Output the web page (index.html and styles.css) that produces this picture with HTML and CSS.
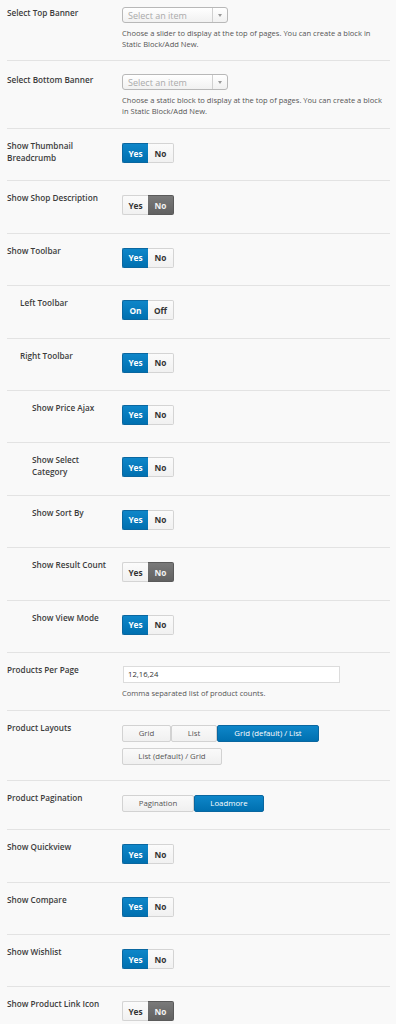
FILE: index.html
```html
<!DOCTYPE html>
<html lang="en">
<head>
    <meta charset="UTF-8">
    <meta name="viewport" content="width=device-width, initial-scale=1.0">
    <title>Shop Options</title>
    <link rel="stylesheet" href="styles.css">
</head>
<body>

<div class="options">

    <div class="row row-select first">
        <div class="label">Select Top Banner</div>
        <div class="field">
            <div class="select">
                <span class="placeholder">Select an item</span>
                <span class="arrow"></span>
            </div>
            <p class="desc">Choose a slider to display at the top of pages. You can create a block in Static Block/Add New.</p>
        </div>
    </div>

    <div class="row row-select">
        <div class="label">Select Bottom Banner</div>
        <div class="field">
            <div class="select">
                <span class="placeholder">Select an item</span>
                <span class="arrow"></span>
            </div>
            <p class="desc">Choose a static block to display at the top of pages. You can create a block in Static Block/Add New.</p>
        </div>
    </div>

    <div class="row">
        <div class="label">Show Thumbnail Breadcrumb</div>
        <div class="field">
            <div class="toggle"><span class="on">Yes</span><span>No</span></div>
        </div>
    </div>

    <div class="row">
        <div class="label">Show Shop Description</div>
        <div class="field">
            <div class="toggle"><span>Yes</span><span class="off">No</span></div>
        </div>
    </div>

    <div class="row">
        <div class="label">Show Toolbar</div>
        <div class="field">
            <div class="toggle"><span class="on">Yes</span><span>No</span></div>
        </div>
    </div>

    <div class="row">
        <div class="label indent-1">Left Toolbar</div>
        <div class="field">
            <div class="toggle"><span class="on">On</span><span>Off</span></div>
        </div>
    </div>

    <div class="row">
        <div class="label indent-1">Right Toolbar</div>
        <div class="field">
            <div class="toggle"><span class="on">Yes</span><span>No</span></div>
        </div>
    </div>

    <div class="row">
        <div class="label indent-2">Show Price Ajax</div>
        <div class="field">
            <div class="toggle"><span class="on">Yes</span><span>No</span></div>
        </div>
    </div>

    <div class="row">
        <div class="label indent-2">Show Select Category</div>
        <div class="field">
            <div class="toggle"><span class="on">Yes</span><span>No</span></div>
        </div>
    </div>

    <div class="row">
        <div class="label indent-2">Show Sort By</div>
        <div class="field">
            <div class="toggle"><span class="on">Yes</span><span>No</span></div>
        </div>
    </div>

    <div class="row">
        <div class="label indent-2">Show Result Count</div>
        <div class="field">
            <div class="toggle"><span>Yes</span><span class="off">No</span></div>
        </div>
    </div>

    <div class="row">
        <div class="label indent-2">Show View Mode</div>
        <div class="field">
            <div class="toggle"><span class="on">Yes</span><span>No</span></div>
        </div>
    </div>

    <div class="row row-input">
        <div class="label">Products Per Page</div>
        <div class="field">
            <input type="text" class="text-input" value="12,16,24">
            <p class="desc">Comma separated list of product counts.</p>
        </div>
    </div>

    <div class="row row-layouts">
        <div class="label">Product Layouts</div>
        <div class="field">
            <div class="btn-group">
                <span class="btn w-grid">Grid</span><span class="btn w-list">List</span><span class="btn w-gridlist active">Grid (default) / List</span>
            </div>
            <div class="btn-group">
                <span class="btn w-listgrid">List (default) / Grid</span>
            </div>
        </div>
    </div>

    <div class="row">
        <div class="label">Product Pagination</div>
        <div class="field">
            <div class="btn-group">
                <span class="btn w-pag">Pagination</span><span class="btn w-more active">Loadmore</span>
            </div>
        </div>
    </div>

    <div class="row">
        <div class="label">Show Quickview</div>
        <div class="field">
            <div class="toggle"><span class="on">Yes</span><span>No</span></div>
        </div>
    </div>

    <div class="row">
        <div class="label">Show Compare</div>
        <div class="field">
            <div class="toggle"><span class="on">Yes</span><span>No</span></div>
        </div>
    </div>

    <div class="row">
        <div class="label">Show Wishlist</div>
        <div class="field">
            <div class="toggle"><span class="on">Yes</span><span>No</span></div>
        </div>
    </div>

    <div class="row">
        <div class="label">Show Product Link Icon</div>
        <div class="field">
            <div class="toggle"><span>Yes</span><span class="off">No</span></div>
        </div>
    </div>

</div>

</body>
</html>
```

FILE: styles.css
```css
body {
    font-family: 'Open Sans', 'Noto Sans', sans-serif;
    background-color: #f9f9f9;
    color: #444;
    margin: 0;
    padding: 0;
}

.options {
    padding: 0 6px 0 7px;
}

.row {
    display: flex;
    align-items: flex-start;
    padding: 11px 0 17.4px;
    border-bottom: 1px solid #e3e3e3;
}

.row-select {
    padding: 13px 0 11px;
}

.row-select.first {
    padding: 7px 0 10px;
}

.row-input {
    padding: 11px 0 11px;
}

.row-layouts {
    padding: 11px 0 15px;
}

.label {
    width: 115px;
    flex-shrink: 0;
    box-sizing: border-box;
    padding-right: 8px;
    font-size: 8.2px;
    font-weight: 600;
    line-height: 11.5px;
    color: #3c3c3c;
}

.label.indent-1 {
    padding-left: 13px;
}

.label.indent-2 {
    padding-left: 25px;
}

.field {
    flex: 1;
    padding-top: 3px;
}

.row-select .field {
    padding-top: 0;
}

.row-input .field {
    padding-top: 2px;
}

/* select box */
.select {
    width: 106px;
    height: 16px;
    box-sizing: border-box;
    border: 1px solid #b8b8b8;
    border-radius: 3px;
    background: linear-gradient(#ffffff, #f1f1f1);
    display: flex;
    align-items: center;
}

.placeholder {
    flex: 1;
    padding-left: 5px;
    font-size: 9px;
    color: #aaa;
}

.arrow {
    width: 14px;
    height: 100%;
    border-left: 1px solid #d0d0d0;
    position: relative;
}

.arrow::after {
    content: "";
    position: absolute;
    left: 5px;
    top: 6px;
    border-left: 2px solid transparent;
    border-right: 2px solid transparent;
    border-top: 3px solid #999;
}

.desc {
    margin: 5px 0 0;
    font-size: 7.55px;
    line-height: 11px;
    color: #555;
}

/* yes / no switch */
.toggle {
    display: flex;
    width: 52px;
    height: 20px;
}

.toggle span {
    flex: 1;
    box-sizing: border-box;
    display: flex;
    align-items: center;
    justify-content: center;
    font-size: 8.3px;
    font-weight: 700;
    color: #333;
    background: linear-gradient(#fbfbfb, #f1f1f1);
    border: 1px solid #d4d4d4;
}

.toggle span:first-child {
    border-radius: 2px 0 0 2px;
    border-right: none;
}

.toggle span:last-child {
    border-radius: 0 2px 2px 0;
    border-left: none;
}

.toggle span.on {
    background: linear-gradient(#0e86c9, #0070b0);
    border-color: #0a67a0;
    color: #fff;
}

.toggle span.off {
    background: linear-gradient(#7a7a7a, #616161);
    border-color: #5a5a5a;
    color: #f2f2f2;
}

/* button groups */
.btn-group {
    display: flex;
    margin-bottom: 6px;
}

.btn-group:last-child {
    margin-bottom: 0;
}

.btn {
    height: 17px;
    box-sizing: border-box;
    display: flex;
    align-items: center;
    justify-content: center;
    font-size: 7.8px;
    color: #555;
    background: linear-gradient(#fafafa, #f0f0f0);
    border: 1px solid #d2d2d2;
    border-radius: 2px;
}

.btn.active {
    background: linear-gradient(#0e86c9, #0070b0);
    border-color: #0a67a0;
    color: #fff;
}

.w-grid { width: 49px; }
.w-list { width: 46px; }
.w-gridlist { width: 102px; }
.w-listgrid { width: 100px; }
.w-pag { width: 72px; }
.w-more { width: 70px; }

.text-input {
    display: block;
    width: 217px;
    height: 17px;
    box-sizing: border-box;
    margin: 0 0 0 1px;
    padding: 0 4px;
    border: 1px solid #dcdcdc;
    background: #fff;
    font-family: 'Open Sans', 'Noto Sans', sans-serif;
    font-size: 7.7px;
    color: #333;
}
```
